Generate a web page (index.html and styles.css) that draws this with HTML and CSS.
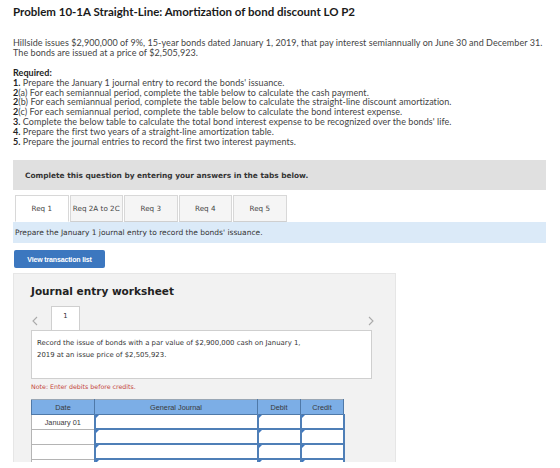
FILE: index.html
```html
<!DOCTYPE html>
<html lang="en">

<head>
    <meta charset="UTF-8">
    <title>Problem 10-1A</title>
    <link rel="stylesheet" href="styles.css">
</head>

<body>
    <div class="page">
        <h1 class="problem-title">Problem 10-1A Straight-Line: Amortization of bond discount LO P2</h1>

        <p class="intro">Hillside issues $2,900,000 of 9%, 15-year bonds dated January 1, 2019, that pay interest semiannually on June 30 and December 31.<br>The bonds are issued at a price of $2,505,923.</p>

        <div class="required">
            <div class="req-head">Required:</div>
            <div><b>1.</b> Prepare the January 1 journal entry to record the bonds' issuance.</div>
            <div><b>2</b>(a) For each semiannual period, complete the table below to calculate the cash payment.</div>
            <div><b>2</b>(b) For each semiannual period, complete the table below to calculate the straight-line discount amortization.</div>
            <div><b>2</b>(c) For each semiannual period, complete the table below to calculate the bond interest expense.</div>
            <div><b>3.</b> Complete the below table to calculate the total bond interest expense to be recognized over the bonds' life.</div>
            <div><b>4.</b> Prepare the first two years of a straight-line amortization table.</div>
            <div><b>5.</b> Prepare the journal entries to record the first two interest payments.</div>
        </div>

        <div class="question-bar">Complete this question by entering your answers in the tabs below.</div>

        <div class="tabs">
            <div class="tab active">Req 1</div>
            <div class="tab">Req 2A to 2C</div>
            <div class="tab">Req 3</div>
            <div class="tab">Req 4</div>
            <div class="tab">Req 5</div>
        </div>
        <div class="tab-note">Prepare the January 1 journal entry to record the bonds' issuance.</div>

        <button class="btn-list">View transaction list</button>

        <div class="worksheet">
            <h2 class="ws-title">Journal entry worksheet</h2>

            <div class="ws-nav">
                <span class="arrow">
                    <svg width="6" height="10" viewBox="0 0 6 10"><path d="M5 1 L1 5 L5 9" fill="none" stroke="#aaa" stroke-width="1.1"/></svg>
                </span>
                <div class="ws-tab">1</div>
                <span class="arrow right">
                    <svg width="6" height="10" viewBox="0 0 6 10"><path d="M1 1 L5 5 L1 9" fill="none" stroke="#aaa" stroke-width="1.1"/></svg>
                </span>
            </div>
            <div class="ws-card">Record the issue of bonds with a par value of $2,900,000 cash on January 1,<br>2019 at an issue price of $2,505,923.</div>

            <div class="ws-note">Note: Enter debits before credits.</div>

            <table class="journal">
                <thead>
                    <tr>
                        <th class="c-date">Date</th>
                        <th class="c-acct">General Journal</th>
                        <th class="c-num">Debit</th>
                        <th class="c-num">Credit</th>
                    </tr>
                </thead>
                <tbody>
                    <tr>
                        <td class="date">January 01</td>
                        <td class="inp"></td>
                        <td class="inp"></td>
                        <td class="inp"></td>
                    </tr>
                    <tr>
                        <td class="date"></td>
                        <td class="inp"></td>
                        <td class="inp"></td>
                        <td class="inp"></td>
                    </tr>
                    <tr>
                        <td class="date"></td>
                        <td class="inp"></td>
                        <td class="inp"></td>
                        <td class="inp"></td>
                    </tr>
                    <tr>
                        <td class="date"></td>
                        <td class="inp"></td>
                        <td class="inp"></td>
                        <td class="inp"></td>
                    </tr>
                </tbody>
            </table>
        </div>
    </div>
</body>

</html>
```

FILE: styles.css
```css
body {
    margin: 0;
    background: #fff;
}

.page {
    height: 462px;
    overflow: hidden;
    padding-left: 13px;
    width: 533px;
    font-family: Lato, "Liberation Sans", sans-serif;
    color: #444;
}

.problem-title {
    margin: 0;
    padding-top: 5px;
    font-size: 11.5px;
    line-height: 14px;
    font-weight: 700;
    color: #1a1a1a;
}

.intro {
    margin: 19px 0 0;
    font-size: 9px;
    line-height: 9.5px;
    letter-spacing: 0.06px;
}

.required {
    margin-top: 11px;
    font-size: 9px;
    line-height: 9.8px;
    letter-spacing: 0.06px;
}

.required b,
.req-head {
    font-weight: 700;
    color: #222;
}

/* question area: Verdana-like */
.question-bar,
.tabs,
.tab-note,
.worksheet {
    font-family: "DejaVu Sans", Verdana, sans-serif;
}

.question-bar {
    margin-top: 14px;
    height: 30px;
    padding-left: 12px;
    display: flex;
    align-items: center;
    background: #e0e0e0;
    font-size: 7.4px;
    font-weight: 700;
    color: #333;
}

.tabs {
    display: flex;
    gap: 1px;
    margin-top: 5px;
    padding-left: 2px;
}

.tab {
    box-sizing: border-box;
    width: 53.5px;
    height: 27px;
    display: flex;
    align-items: center;
    justify-content: center;
    background: #f5f5f5;
    border: 1px solid #d8d8d8;
    border-bottom-color: #cfcfcf;
    font-size: 7.2px;
    color: #444;
}

.tab.active {
    background: #fff;
    border-bottom-color: #fff;
}

.tab-note {
    height: 21px;
    display: flex;
    align-items: center;
    padding-left: 2px;
    background: #dbeaf8;
    font-size: 7.5px;
    color: #333;
}

.btn-list {
    display: block;
    margin: 7px 0 0 1px;
    width: 91px;
    height: 18px;
    padding: 0;
    border: 0;
    border-radius: 2px;
    background: #3c77bf;
    color: #fff;
    font-family: "Liberation Sans", Arial, sans-serif;
    font-size: 7px;
    font-weight: 700;
    letter-spacing: -0.15px;
}

.worksheet {
    box-sizing: border-box;
    margin-top: 5px;
    width: 383px;
    height: 200px;
    padding: 11px 0 0 17px;
    background: #f2f2f2;
    border: 1px solid #e6e6e6;
}

.ws-title {
    margin: 0;
    font-size: 10.5px;
    line-height: 12px;
    font-weight: 700;
    color: #222;
}

.ws-nav {
    display: flex;
    align-items: flex-start;
    width: 341px;
    margin-top: 9px;
}

.arrow {
    width: 20px;
    padding: 5px 0 0 1px;
    box-sizing: border-box;
}

.arrow.right {
    margin-left: auto;
    width: auto;
    padding-right: 0;
    margin-right: -2px;
}

.ws-tab {
    position: relative;
    box-sizing: border-box;
    width: 29px;
    height: 24px;
    margin-bottom: -1px;
    padding-top: 5px;
    text-align: center;
    background: #fff;
    border: 1px solid #cfcfcf;
    border-bottom: 0;
    font-size: 6.8px;
    color: #333;
}

.ws-card {
    box-sizing: border-box;
    width: 341px;
    height: 49px;
    padding: 6px 0 0 5px;
    background: #fff;
    border: 1px solid #cfcfcf;
    font-size: 6.9px;
    line-height: 12px;
    color: #333;
}

.ws-note {
    margin-top: 4px;
    font-size: 6.3px;
    line-height: 8px;
    color: #c4463c;
}

.journal {
    margin-top: 8px;
    width: 308px;
    border-collapse: collapse;
    table-layout: fixed;
    font-family: "Liberation Sans", Arial, sans-serif;
    font-size: 7.3px;
    color: #3a3a3a;
}

.journal th {
    height: 14px;
    padding: 0;
    background: #7caee6;
    font-weight: 400;
    border: 1px solid #4f79a8;
    border-top-color: #9aa7b5;
}

.c-date {
    width: 62px;
}

.c-acct {
    width: 162px;
}

.c-num {
    width: 42px;
}

.journal td {
    height: 13px;
    padding: 0;
    background: #fff;
}

.journal td.date {
    text-align: center;
    border: 1px solid #b4b4b4;
}

.journal td.inp {
    position: relative;
    border: 2px solid #4f7fb7;
    border-top-width: 1px;
}

.journal td.inp::before {
    content: "";
    position: absolute;
    top: 0;
    left: 0;
    border-top: 3px solid #3f78c0;
    border-right: 3px solid transparent;
}
```
